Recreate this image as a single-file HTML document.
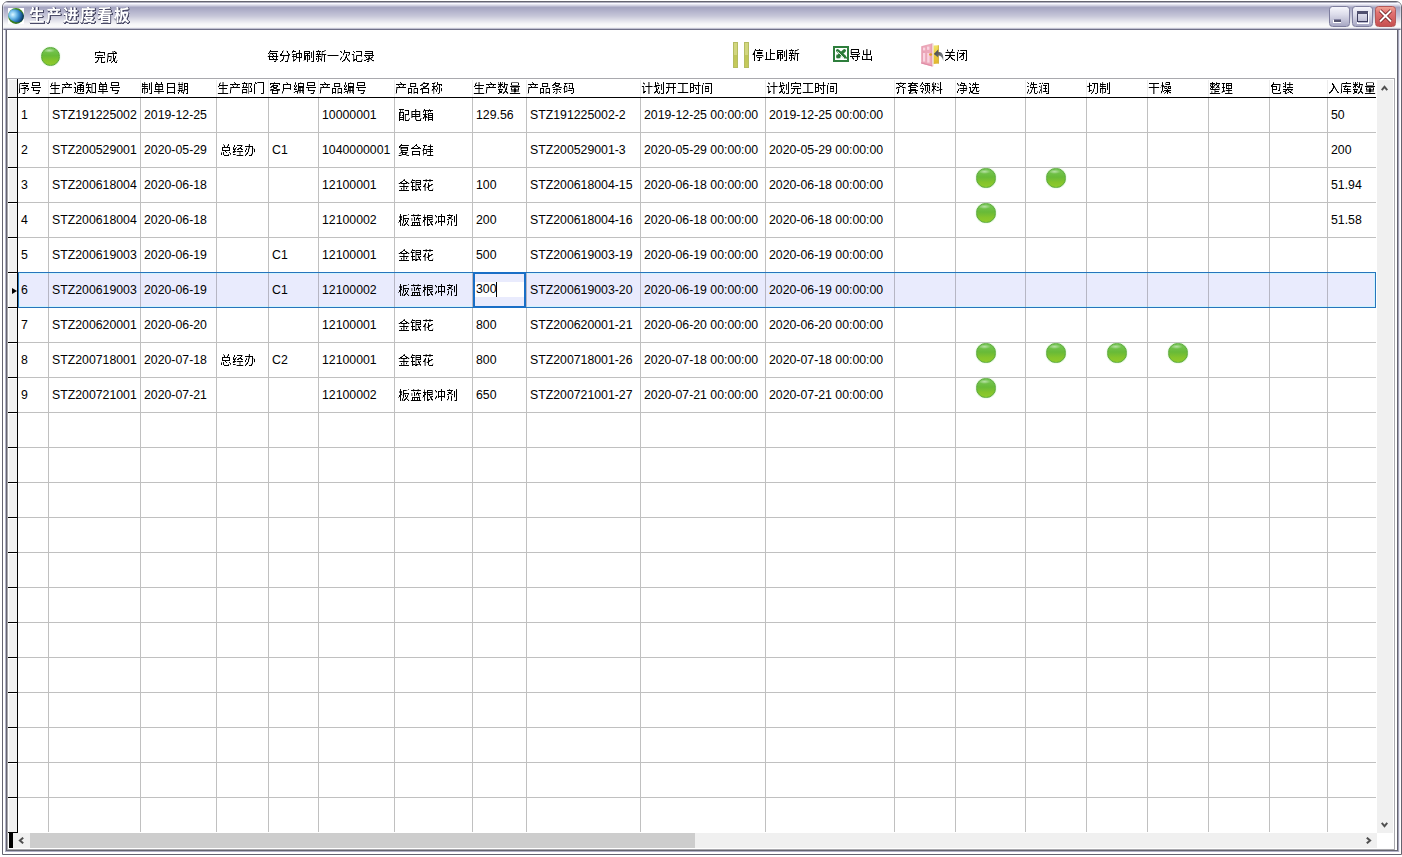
<!DOCTYPE html>
<html lang="zh-CN"><head><meta charset="utf-8"><title>生产进度看板</title>
<style>
html,body{margin:0;padding:0;background:#fff;}
body{width:1402px;height:857px;overflow:hidden;position:relative;font-family:"Liberation Sans","Noto Sans CJK SC",sans-serif;font-size:12px;color:#000;}
.win{position:absolute;left:0;top:0;width:1402px;height:857px;}
.win div,.win svg,.win span,.win i{position:absolute;box-sizing:border-box;}
/* window frame */
.frame{left:2px;top:1px;width:1400px;height:854px;border:1px solid #646470;border-radius:6px 6px 0 0;background:#fff;}
.fl{top:30px;width:1px;height:822px;}
.fb{left:5px;width:1394px;height:1px;}
.title{left:3px;top:2px;width:1398px;height:28px;border-radius:5px 5px 0 0;box-shadow:inset 1px 0 0 rgba(255,255,255,.4),inset -1px 0 0 rgba(255,255,255,.4);
 background:linear-gradient(to bottom,#b0b0c0 0,#b0b0c0 1px,#f8f8ff 1px,#f8f8ff 2px,#e4e4f0 2px,#e4e4f0 3px,#d0d0e0 3px,#d0d0e0 4px,#b8b8d0 4px,#b8b8d0 5px,#a4a4c0 5px,#a6a6c2 6px,#b6b6ce 10px,#c6c6d8 14px,#dedee8 18px,#f6f6f8 22px,#fafafa 25px,#f0f0f4 25px,#f0f0f4 26px,#c0c0d0 26px,#c0c0d0 27px,#707088 27px,#707088 28px);}
.ticon{left:8px;top:8px;width:16px;height:16px;background:#fff;}
.ttext{left:29px;top:5.8px;height:20px;line-height:20px;font-size:15.5px;font-weight:bold;color:#fff;white-space:nowrap;letter-spacing:1.5px;filter:url(#th);
 font-family:"Liberation Sans","Noto Sans CJK SC",sans-serif;text-shadow:1px 1px 0 #4c4c68,1px 0 0 #4c4c68,0 1px 0 #4c4c68;}
.tbtn{top:6px;width:21px;height:21px;border:1px solid #7e7e9e;border-radius:3.5px;background:linear-gradient(to bottom,#f6f6fc 0%,#dcdcea 40%,#a8a8c4 100%);}
.tbtn.cl{border-color:#b45858;background:linear-gradient(to bottom,#f0a494 0%,#e27272 30%,#c65050 100%);}
/* toolbar */
.lbl{white-space:nowrap;height:14px;line-height:14px;font-size:12px;}
.dot{width:19.4px;height:19.4px;border-radius:50%;border:1px solid #58a838;box-shadow:0 0 1.2px #9ce080;
 background:radial-gradient(ellipse 6px 2.2px at 42% 15%,rgba(255,255,255,.5) 0%,rgba(255,255,255,0) 100%),linear-gradient(to bottom,#78c858 0%,#68ba38 45%,#84c42c 75%,#8ecb2c 100%);}
.pbar{top:42px;width:5px;height:26px;border:1px solid #b4bc62;background:linear-gradient(to bottom,#d2d67e 0%,#d2d67e 49%,#c0c656 50%,#c6ca5c 100%);}
/* grid */
.gborder{left:7px;top:78px;width:1388px;height:772px;border:1px solid #a9a9ae;background:#fff;}
.hc{top:81px;height:16px;line-height:16px;white-space:nowrap;overflow:visible;font-size:12px;}
.hsep{top:80px;width:1px;height:17px;background:#ececec;}
.hline{left:8px;top:97px;width:1368px;height:1px;background:#000;}
.vl{top:98px;width:1px;height:734px;background:#c0c0c0;}
.hl{left:18px;width:1358px;height:1px;background:#c0c0c0;}
.indcol{left:9px;top:80px;width:8px;height:753px;background:#f0f0f0;}
.iw{left:9px;width:8px;height:1px;background:#fff;}
.il{left:8px;width:10px;height:1px;background:#000;}
.indline{left:17px;top:79px;width:1px;height:754px;background:#000;}
.sel{left:18px;width:1358px;height:36px;border:1px solid #2874bc;background:#e9ebfd;box-shadow:inset 0 0 0 1px #cff3ff;}
.svl{background:#b6b6c4;}
.arrow{left:12px;width:0;height:0;border-top:3.5px solid transparent;border-bottom:3.5px solid transparent;border-left:5px solid #000;}
.c{height:34px;line-height:34px;padding-left:3px;white-space:nowrap;overflow:hidden;font-size:12.3px;}
.c.z{font-size:12px;line-height:37px;height:35px;}
.edit{height:36px;border:2px solid #1a6fc6;background:#e9ebfd;}
.edit .tb{left:0;top:8px;width:100%;height:15px;background:#fff;line-height:15px;padding-left:1px;font-size:12.3px;}
.edit .tb i{left:21px;top:0;width:1px;height:15px;background:#000;}
.vsb{left:1377px;top:80px;width:16px;height:753px;background:#f0f0f0;}
.vsb .up{left:4px;top:5px;}
.vsb .dn{left:4px;bottom:5px;}
.hsb{left:9px;top:833px;width:1368px;height:15px;background:#f0f0f0;}
.hsb .split{left:0;top:0;width:4px;height:15px;background:#000;}
.hsb .thumb{left:21px;top:0;width:665px;height:15px;background:#cdcdcd;}
.hsb .lf{left:9px;top:3px;}
.hsb .rt{right:6px;top:3px;}
.lbl,.hc,.c.z{filter:url(#th);}

</style></head>
<body>
<div class="win">
<svg width="0" height="0" style="left:0;top:0"><filter id="th" x="0" y="0" width="100%" height="100%" color-interpolation-filters="sRGB"><feComponentTransfer><feFuncA type="linear" slope="3" intercept="-0.9"/></feComponentTransfer></filter></svg>
<div class="frame"></div>
<div class="fl" style="left:5px;background:#b4b4c8"></div><div class="fl" style="left:6px;background:#64646f"></div><div class="fl" style="left:1397px;background:#64646f"></div><div class="fl" style="left:1398px;background:#a4a4b8"></div><div class="fl" style="left:1399px;background:#ececf6"></div><div class="fb" style="top:850px;left:6px;width:1392px;background:#64646f"></div><div class="fb" style="top:851px;background:#b0b0c6"></div>
<div class="title"></div>
<div class="ticon"><svg width="16" height="16" viewBox="0 0 16 16" style="left:0;top:0">
<defs><radialGradient id="gl" gradientUnits="userSpaceOnUse" cx="4.8" cy="6.6" r="10.5"><stop offset="0" stop-color="#dcf6ff"/><stop offset="0.3" stop-color="#84c8f0"/><stop offset="0.6" stop-color="#3a8ccc"/><stop offset="0.85" stop-color="#1a5a92"/><stop offset="1" stop-color="#0c3a60"/></radialGradient>
<linearGradient id="gg" x1="0" y1="0" x2="1" y2="1"><stop offset="0" stop-color="#4c9a24"/><stop offset="1" stop-color="#2c6a18"/></linearGradient></defs>
<clipPath id="ce"><ellipse cx="7.9" cy="7.8" rx="8.6" ry="6.1" transform="rotate(22 8 8)"/></clipPath><circle cx="8" cy="8" r="7.9" fill="url(#gg)"/><circle cx="8" cy="8" r="7.9" fill="url(#gl)" clip-path="url(#ce)"/></svg></div>
<div class="ttext">生产进度看板</div>
<div class="tbtn" style="left:1329px"><svg width="19" height="19" viewBox="0 0 19 19" style="left:0;top:0"><rect x="3" y="13" width="8" height="3" fill="#fff"/><rect x="4" y="12" width="7" height="3" fill="#54546f"/><rect x="4" y="12" width="7" height="1" fill="#8686a4"/></svg></div>
<div class="tbtn" style="left:1352px"><svg width="19" height="19" viewBox="0 0 19 19" style="left:0;top:0"><rect x="4.5" y="5.5" width="11" height="11" fill="none" stroke="#fff"/><rect x="4.5" y="4.5" width="10" height="10" fill="none" stroke="#3c3c5c"/><rect x="4" y="4" width="11" height="3" fill="#50506e"/></svg></div>
<div class="tbtn cl" style="left:1375px"><svg width="19" height="19" viewBox="0 0 19 19" style="left:0;top:0"><path d="M4 3.5 L15 14.5 M15 3.5 L4 14.5" stroke="#6c2020" stroke-width="3.6" fill="none"/><path d="M4 3.5 L15 14.5 M15 3.5 L4 14.5" stroke="#fff" stroke-width="2" fill="none"/></svg></div>

<div class="dot" style="left:40.9px;top:46.9px;width:19.6px;height:19.6px"></div>
<div class="lbl" style="left:94px;top:51px">完成</div>
<div class="lbl" style="left:267px;top:50px">每分钟刷新一次记录</div>
<div class="pbar" style="left:733px"></div><div class="pbar" style="left:744px"></div>
<div class="lbl" style="left:752px;top:49px">停止刷新</div>
<svg width="16" height="16" viewBox="0 0 16 16" style="left:833px;top:46px"><rect x="1" y="1" width="14" height="14" fill="#fff" stroke="#2e7e3c" stroke-width="2"/><path d="M4.6 4.6 L11.6 10.8 M11.4 4.6 L5 10.6" stroke="#2b7a38" stroke-width="3.2" fill="none" stroke-linecap="round"/><path d="M3.4 8.6 L7.4 8.6 L7.4 12.2 L3.4 12.2 Z" fill="#2b7a38"/><path d="M11 11.4 L14 12" stroke="#2b7a38" stroke-width="1.4"/><path d="M4.4 5.4 L11 12" stroke="#eef8ee" stroke-width="0.9"/></svg>
<div class="lbl" style="left:849px;top:49px">导出</div>
<svg width="24" height="26" viewBox="0 0 24 26" style="left:920px;top:42px">
<defs><linearGradient id="dy" x1="0" y1="0" x2="0" y2="1"><stop offset="0" stop-color="#f2e468"/><stop offset="0.5" stop-color="#eacc3c"/><stop offset="1" stop-color="#e0b62e"/></linearGradient>
<linearGradient id="dp" x1="0" y1="0" x2="1" y2="0"><stop offset="0" stop-color="#e8a2b4"/><stop offset="0.8" stop-color="#eeaabc"/><stop offset="1" stop-color="#e296ac"/></linearGradient>
<linearGradient id="da" x1="0" y1="0" x2="1" y2="1"><stop offset="0" stop-color="#3c3c40"/><stop offset="0.6" stop-color="#6c7074"/><stop offset="1" stop-color="#84888c"/></linearGradient></defs>
<polygon points="13.4,3.4 18.6,3.2 18.6,21.6 13.4,22" fill="url(#dy)"/>
<rect x="17.9" y="3.3" width="0.8" height="18.4" fill="#c8a42a"/>
<polygon points="1.2,4.3 12.5,1.2 12.5,24.6 1.2,21.5" fill="url(#dp)"/>
<polygon points="12.3,1.2 13.5,1.5 13.5,24.3 12.3,24.6" fill="#f0dcd0"/>
<polygon points="1.2,20.3 12.3,23.2 12.3,24.6 1.2,21.5" fill="#e08ca6"/>
<rect x="3" y="5.6" width="2.2" height="2.8" fill="#f9d4e0"/><rect x="7" y="4.6" width="2.4" height="3.2" fill="#f9d4e0"/>
<rect x="3" y="11" width="2.2" height="8.6" fill="#f9d4e0"/><rect x="7.2" y="11" width="2.4" height="9.6" fill="#f9d4e0"/>
<ellipse cx="10.6" cy="12.5" rx="1.5" ry="1.2" fill="#e0a224"/>
<path d="M13.8 12 L18.2 7.6 L18.2 10.2 C21.6 9.6 24 12.4 23.2 18.8 C22.4 15.6 21 13.6 18.2 13.6 L18.2 15.6 Z" fill="url(#da)"/>
</svg>
<div class="lbl" style="left:944px;top:49px">关闭</div>

<div class="gborder"></div>
<div class="grid">
<div class="ind hind"></div>
<div class="hc" style="left:18px;width:30px">序号</div>
<div class="hc" style="left:49px;width:91px">生产通知单号</div>
<div class="hsep" style="left:48px"></div>
<div class="hc" style="left:141px;width:75px">制单日期</div>
<div class="hsep" style="left:140px"></div>
<div class="hc" style="left:217px;width:51px">生产部门</div>
<div class="hsep" style="left:216px"></div>
<div class="hc" style="left:269px;width:49px">客户编号</div>
<div class="hsep" style="left:268px"></div>
<div class="hc" style="left:319px;width:75px">产品编号</div>
<div class="hsep" style="left:318px"></div>
<div class="hc" style="left:395px;width:77px">产品名称</div>
<div class="hsep" style="left:394px"></div>
<div class="hc" style="left:473px;width:53px">生产数量</div>
<div class="hsep" style="left:472px"></div>
<div class="hc" style="left:527px;width:113px">产品条码</div>
<div class="hsep" style="left:526px"></div>
<div class="hc" style="left:641px;width:124px">计划开工时间</div>
<div class="hsep" style="left:640px"></div>
<div class="hc" style="left:766px;width:128px">计划完工时间</div>
<div class="hsep" style="left:765px"></div>
<div class="hc" style="left:895px;width:60px">齐套领料</div>
<div class="hsep" style="left:894px"></div>
<div class="hc" style="left:956px;width:69px">净选</div>
<div class="hsep" style="left:955px"></div>
<div class="hc" style="left:1026px;width:60px">洗润</div>
<div class="hsep" style="left:1025px"></div>
<div class="hc" style="left:1087px;width:60px">切制</div>
<div class="hsep" style="left:1086px"></div>
<div class="hc" style="left:1148px;width:60px">干燥</div>
<div class="hsep" style="left:1147px"></div>
<div class="hc" style="left:1209px;width:60px">整理</div>
<div class="hsep" style="left:1208px"></div>
<div class="hc" style="left:1270px;width:57px">包装</div>
<div class="hsep" style="left:1269px"></div>
<div class="hc" style="left:1328px;width:47px">入库数量</div>
<div class="hsep" style="left:1327px"></div>
<div class="hline"></div>
<div class="vl" style="left:48px"></div>
<div class="vl" style="left:140px"></div>
<div class="vl" style="left:216px"></div>
<div class="vl" style="left:268px"></div>
<div class="vl" style="left:318px"></div>
<div class="vl" style="left:394px"></div>
<div class="vl" style="left:472px"></div>
<div class="vl" style="left:526px"></div>
<div class="vl" style="left:640px"></div>
<div class="vl" style="left:765px"></div>
<div class="vl" style="left:894px"></div>
<div class="vl" style="left:955px"></div>
<div class="vl" style="left:1025px"></div>
<div class="vl" style="left:1086px"></div>
<div class="vl" style="left:1147px"></div>
<div class="vl" style="left:1208px"></div>
<div class="vl" style="left:1269px"></div>
<div class="vl" style="left:1327px"></div>
<div class="hl" style="top:132px"></div>
<div class="hl" style="top:167px"></div>
<div class="hl" style="top:202px"></div>
<div class="hl" style="top:237px"></div>
<div class="hl" style="top:272px"></div>
<div class="hl" style="top:307px"></div>
<div class="hl" style="top:342px"></div>
<div class="hl" style="top:377px"></div>
<div class="hl" style="top:412px"></div>
<div class="hl" style="top:447px"></div>
<div class="hl" style="top:482px"></div>
<div class="hl" style="top:517px"></div>
<div class="hl" style="top:552px"></div>
<div class="hl" style="top:587px"></div>
<div class="hl" style="top:622px"></div>
<div class="hl" style="top:657px"></div>
<div class="hl" style="top:692px"></div>
<div class="hl" style="top:727px"></div>
<div class="hl" style="top:762px"></div>
<div class="hl" style="top:797px"></div>
<div class="indcol"></div>
<div class="il" style="top:97px"></div>
<div class="iw" style="top:98px"></div>
<div class="il" style="top:132px"></div>
<div class="iw" style="top:133px"></div>
<div class="il" style="top:167px"></div>
<div class="iw" style="top:168px"></div>
<div class="il" style="top:202px"></div>
<div class="iw" style="top:203px"></div>
<div class="il" style="top:237px"></div>
<div class="iw" style="top:238px"></div>
<div class="il" style="top:272px"></div>
<div class="iw" style="top:273px"></div>
<div class="il" style="top:307px"></div>
<div class="iw" style="top:308px"></div>
<div class="il" style="top:342px"></div>
<div class="iw" style="top:343px"></div>
<div class="il" style="top:377px"></div>
<div class="iw" style="top:378px"></div>
<div class="il" style="top:412px"></div>
<div class="iw" style="top:413px"></div>
<div class="il" style="top:447px"></div>
<div class="iw" style="top:448px"></div>
<div class="il" style="top:482px"></div>
<div class="iw" style="top:483px"></div>
<div class="il" style="top:517px"></div>
<div class="iw" style="top:518px"></div>
<div class="il" style="top:552px"></div>
<div class="iw" style="top:553px"></div>
<div class="il" style="top:587px"></div>
<div class="iw" style="top:588px"></div>
<div class="il" style="top:622px"></div>
<div class="iw" style="top:623px"></div>
<div class="il" style="top:657px"></div>
<div class="iw" style="top:658px"></div>
<div class="il" style="top:692px"></div>
<div class="iw" style="top:693px"></div>
<div class="il" style="top:727px"></div>
<div class="iw" style="top:728px"></div>
<div class="il" style="top:762px"></div>
<div class="iw" style="top:763px"></div>
<div class="il" style="top:797px"></div>
<div class="iw" style="top:798px"></div>
<div class="il" style="top:832px"></div>
<div class="indline"></div>
<div class="sel" style="top:272px"></div>
<div class="vl svl" style="left:48px;top:273px;height:34px"></div>
<div class="vl svl" style="left:140px;top:273px;height:34px"></div>
<div class="vl svl" style="left:216px;top:273px;height:34px"></div>
<div class="vl svl" style="left:268px;top:273px;height:34px"></div>
<div class="vl svl" style="left:318px;top:273px;height:34px"></div>
<div class="vl svl" style="left:394px;top:273px;height:34px"></div>
<div class="vl svl" style="left:472px;top:273px;height:34px"></div>
<div class="vl svl" style="left:526px;top:273px;height:34px"></div>
<div class="vl svl" style="left:640px;top:273px;height:34px"></div>
<div class="vl svl" style="left:765px;top:273px;height:34px"></div>
<div class="vl svl" style="left:894px;top:273px;height:34px"></div>
<div class="vl svl" style="left:955px;top:273px;height:34px"></div>
<div class="vl svl" style="left:1025px;top:273px;height:34px"></div>
<div class="vl svl" style="left:1086px;top:273px;height:34px"></div>
<div class="vl svl" style="left:1147px;top:273px;height:34px"></div>
<div class="vl svl" style="left:1208px;top:273px;height:34px"></div>
<div class="vl svl" style="left:1269px;top:273px;height:34px"></div>
<div class="vl svl" style="left:1327px;top:273px;height:34px"></div>
<div class="arrow" style="top:288px"></div>
<div class="c" style="left:18px;top:98px;width:30px">1</div>
<div class="c" style="left:49px;top:98px;width:91px">STZ191225002</div>
<div class="c" style="left:141px;top:98px;width:75px">2019-12-25</div>
<div class="c" style="left:319px;top:98px;width:75px">10000001</div>
<div class="c z" style="left:395px;top:98px;width:77px">配电箱</div>
<div class="c" style="left:473px;top:98px;width:53px">129.56</div>
<div class="c" style="left:527px;top:98px;width:113px">STZ191225002-2</div>
<div class="c" style="left:641px;top:98px;width:124px">2019-12-25 00:00:00</div>
<div class="c" style="left:766px;top:98px;width:128px">2019-12-25 00:00:00</div>
<div class="c" style="left:1328px;top:98px;width:47px">50</div>
<div class="c" style="left:18px;top:133px;width:30px">2</div>
<div class="c" style="left:49px;top:133px;width:91px">STZ200529001</div>
<div class="c" style="left:141px;top:133px;width:75px">2020-05-29</div>
<div class="c z" style="left:217px;top:133px;width:51px">总经办</div>
<div class="c" style="left:269px;top:133px;width:49px">C1</div>
<div class="c" style="left:319px;top:133px;width:75px">1040000001</div>
<div class="c z" style="left:395px;top:133px;width:77px">复合硅</div>
<div class="c" style="left:527px;top:133px;width:113px">STZ200529001-3</div>
<div class="c" style="left:641px;top:133px;width:124px">2020-05-29 00:00:00</div>
<div class="c" style="left:766px;top:133px;width:128px">2020-05-29 00:00:00</div>
<div class="c" style="left:1328px;top:133px;width:47px">200</div>
<div class="c" style="left:18px;top:168px;width:30px">3</div>
<div class="c" style="left:49px;top:168px;width:91px">STZ200618004</div>
<div class="c" style="left:141px;top:168px;width:75px">2020-06-18</div>
<div class="c" style="left:319px;top:168px;width:75px">12100001</div>
<div class="c z" style="left:395px;top:168px;width:77px">金银花</div>
<div class="c" style="left:473px;top:168px;width:53px">100</div>
<div class="c" style="left:527px;top:168px;width:113px">STZ200618004-15</div>
<div class="c" style="left:641px;top:168px;width:124px">2020-06-18 00:00:00</div>
<div class="c" style="left:766px;top:168px;width:128px">2020-06-18 00:00:00</div>
<div class="dot" style="left:976.3px;top:168.2px"></div>
<div class="dot" style="left:1046.3px;top:168.2px"></div>
<div class="c" style="left:1328px;top:168px;width:47px">51.94</div>
<div class="c" style="left:18px;top:203px;width:30px">4</div>
<div class="c" style="left:49px;top:203px;width:91px">STZ200618004</div>
<div class="c" style="left:141px;top:203px;width:75px">2020-06-18</div>
<div class="c" style="left:319px;top:203px;width:75px">12100002</div>
<div class="c z" style="left:395px;top:203px;width:77px">板蓝根冲剂</div>
<div class="c" style="left:473px;top:203px;width:53px">200</div>
<div class="c" style="left:527px;top:203px;width:113px">STZ200618004-16</div>
<div class="c" style="left:641px;top:203px;width:124px">2020-06-18 00:00:00</div>
<div class="c" style="left:766px;top:203px;width:128px">2020-06-18 00:00:00</div>
<div class="dot" style="left:976.3px;top:203.2px"></div>
<div class="c" style="left:1328px;top:203px;width:47px">51.58</div>
<div class="c" style="left:18px;top:238px;width:30px">5</div>
<div class="c" style="left:49px;top:238px;width:91px">STZ200619003</div>
<div class="c" style="left:141px;top:238px;width:75px">2020-06-19</div>
<div class="c" style="left:269px;top:238px;width:49px">C1</div>
<div class="c" style="left:319px;top:238px;width:75px">12100001</div>
<div class="c z" style="left:395px;top:238px;width:77px">金银花</div>
<div class="c" style="left:473px;top:238px;width:53px">500</div>
<div class="c" style="left:527px;top:238px;width:113px">STZ200619003-19</div>
<div class="c" style="left:641px;top:238px;width:124px">2020-06-19 00:00:00</div>
<div class="c" style="left:766px;top:238px;width:128px">2020-06-19 00:00:00</div>
<div class="c" style="left:18px;top:273px;width:30px">6</div>
<div class="c" style="left:49px;top:273px;width:91px">STZ200619003</div>
<div class="c" style="left:141px;top:273px;width:75px">2020-06-19</div>
<div class="c" style="left:269px;top:273px;width:49px">C1</div>
<div class="c" style="left:319px;top:273px;width:75px">12100002</div>
<div class="c z" style="left:395px;top:273px;width:77px">板蓝根冲剂</div>
<div class="edit" style="left:473px;top:272px;width:53px"><div class="tb">300<i></i></div></div>
<div class="c" style="left:527px;top:273px;width:113px">STZ200619003-20</div>
<div class="c" style="left:641px;top:273px;width:124px">2020-06-19 00:00:00</div>
<div class="c" style="left:766px;top:273px;width:128px">2020-06-19 00:00:00</div>
<div class="c" style="left:18px;top:308px;width:30px">7</div>
<div class="c" style="left:49px;top:308px;width:91px">STZ200620001</div>
<div class="c" style="left:141px;top:308px;width:75px">2020-06-20</div>
<div class="c" style="left:319px;top:308px;width:75px">12100001</div>
<div class="c z" style="left:395px;top:308px;width:77px">金银花</div>
<div class="c" style="left:473px;top:308px;width:53px">800</div>
<div class="c" style="left:527px;top:308px;width:113px">STZ200620001-21</div>
<div class="c" style="left:641px;top:308px;width:124px">2020-06-20 00:00:00</div>
<div class="c" style="left:766px;top:308px;width:128px">2020-06-20 00:00:00</div>
<div class="c" style="left:18px;top:343px;width:30px">8</div>
<div class="c" style="left:49px;top:343px;width:91px">STZ200718001</div>
<div class="c" style="left:141px;top:343px;width:75px">2020-07-18</div>
<div class="c z" style="left:217px;top:343px;width:51px">总经办</div>
<div class="c" style="left:269px;top:343px;width:49px">C2</div>
<div class="c" style="left:319px;top:343px;width:75px">12100001</div>
<div class="c z" style="left:395px;top:343px;width:77px">金银花</div>
<div class="c" style="left:473px;top:343px;width:53px">800</div>
<div class="c" style="left:527px;top:343px;width:113px">STZ200718001-26</div>
<div class="c" style="left:641px;top:343px;width:124px">2020-07-18 00:00:00</div>
<div class="c" style="left:766px;top:343px;width:128px">2020-07-18 00:00:00</div>
<div class="dot" style="left:976.3px;top:343.2px"></div>
<div class="dot" style="left:1046.3px;top:343.2px"></div>
<div class="dot" style="left:1107.3px;top:343.2px"></div>
<div class="dot" style="left:1168.3px;top:343.2px"></div>
<div class="c" style="left:18px;top:378px;width:30px">9</div>
<div class="c" style="left:49px;top:378px;width:91px">STZ200721001</div>
<div class="c" style="left:141px;top:378px;width:75px">2020-07-21</div>
<div class="c" style="left:319px;top:378px;width:75px">12100002</div>
<div class="c z" style="left:395px;top:378px;width:77px">板蓝根冲剂</div>
<div class="c" style="left:473px;top:378px;width:53px">650</div>
<div class="c" style="left:527px;top:378px;width:113px">STZ200721001-27</div>
<div class="c" style="left:641px;top:378px;width:124px">2020-07-21 00:00:00</div>
<div class="c" style="left:766px;top:378px;width:128px">2020-07-21 00:00:00</div>
<div class="dot" style="left:976.3px;top:378.2px"></div>
<div class="vsb"><svg width="7" height="6" viewBox="0 0 7 6" style="left:4px;top:5px"><path d="M0.7 5.2 L3.5 1.9 L6.3 5.2" fill="none" stroke="#505050" stroke-width="2"/></svg><svg width="7" height="6" viewBox="0 0 7 6" style="left:4px;top:742px"><path d="M0.7 0.8 L3.5 4.1 L6.3 0.8" fill="none" stroke="#505050" stroke-width="2"/></svg></div>
<div class="hsb"><div class="split"></div><svg width="6" height="7" viewBox="0 0 6 7" style="left:9px;top:4px"><path d="M5.2 0.7 L1.9 3.5 L5.2 6.3" fill="none" stroke="#505050" stroke-width="2"/></svg><div class="thumb"></div><svg width="6" height="7" viewBox="0 0 6 7" style="left:1357px;top:4px"><path d="M0.8 0.7 L4.1 3.5 L0.8 6.3" fill="none" stroke="#505050" stroke-width="2"/></svg></div>
</div>
</div>
</body></html>
